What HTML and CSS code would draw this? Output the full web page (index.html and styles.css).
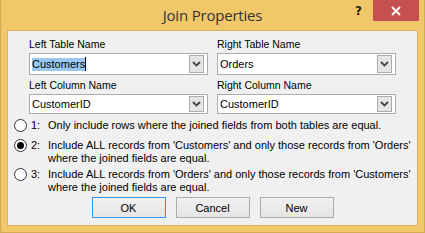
FILE: index.html
```html
<!DOCTYPE html>
<html>
<head>
<meta charset="utf-8">
<title>Join Properties</title>
<link rel="stylesheet" href="styles.css">
</head>
<body>
<div class="window">
  <div class="titlebar">
    <div class="tb-side"></div>
    <div class="title">Join Properties</div>
    <div class="tb-side tb-right">
      <span class="help">?</span>
      <span class="close"><svg width="10" height="10" viewBox="0 0 10 10"><path d="M1 1 L9 9 M9 1 L1 9" stroke="#fff" stroke-width="2"/></svg></span>
    </div>
  </div>
  <div class="client">
    <div class="fields">
      <div class="field">
        <div class="label">Left Table Name</div>
        <div class="combo"><span class="value"><span class="sel">Customers</span><span class="caret"></span></span><span class="drop"><svg width="9" height="6" viewBox="0 0 9 6"><path d="M1 1 L4.5 4.5 L8 1" fill="none" stroke="#444" stroke-width="1.8"/></svg></span></div>
      </div>
      <div class="field">
        <div class="label">Right Table Name</div>
        <div class="combo"><span class="value">Orders</span><span class="drop"><svg width="9" height="6" viewBox="0 0 9 6"><path d="M1 1 L4.5 4.5 L8 1" fill="none" stroke="#444" stroke-width="1.8"/></svg></span></div>
      </div>
      <div class="field">
        <div class="label">Left Column Name</div>
        <div class="combo combo-sm"><span class="value">CustomerID</span><span class="drop"><svg width="9" height="6" viewBox="0 0 9 6"><path d="M1 1 L4.5 4.5 L8 1" fill="none" stroke="#444" stroke-width="1.8"/></svg></span></div>
      </div>
      <div class="field">
        <div class="label">Right Column Name</div>
        <div class="combo combo-sm"><span class="value">CustomerID</span><span class="drop"><svg width="9" height="6" viewBox="0 0 9 6"><path d="M1 1 L4.5 4.5 L8 1" fill="none" stroke="#444" stroke-width="1.8"/></svg></span></div>
      </div>
    </div>
    <div class="options">
      <div class="opt opt-first">
        <span class="radio"></span><span class="num">1:</span>
        <span class="text">Only include rows where the joined fields from both tables are equal.</span>
      </div>
      <div class="opt opt-mid">
        <span class="radio checked"></span><span class="num">2:</span>
        <span class="text">Include ALL records from 'Customers' and only those records from 'Orders'<br>where the joined fields are equal.</span>
      </div>
      <div class="opt">
        <span class="radio"></span><span class="num">3:</span>
        <span class="text">Include ALL records from 'Orders' and only those records from 'Customers'<br>where the joined fields are equal.</span>
      </div>
    </div>
    <div class="buttons">
      <div class="btn btn-default">OK</div>
      <div class="btn">Cancel</div>
      <div class="btn">New</div>
    </div>
  </div>
</div>
</body>
</html>
```
FILE: styles.css
```css
* { box-sizing: border-box; }
html, body { margin: 0; padding: 0; }
body {
  width: 425px;
  height: 233px;
  overflow: hidden;
  font-family: "Liberation Sans", Arial, sans-serif;
  font-size: 11px;
  color: #000;
}
.window {
  width: 425px;
  height: 233px;
  background: #f0c869;
  border: 1px solid #d3aa4f;
  border-top: none;
  display: flex;
  flex-direction: column;
}
.titlebar {
  height: 30px;
  flex: none;
  display: grid;
  grid-template-columns: 1fr auto 1fr;
  align-items: start;
}
.title {
  font-family: "Open Sans", "Noto Sans", sans-serif;
  font-size: 15px;
  color: #333;
  line-height: 30px;
  letter-spacing: -0.2px;
}
.tb-right {
  display: flex;
  justify-content: flex-end;
  align-items: flex-start;
  padding-right: 5px;
}
.help {
  font-family: "DejaVu Sans", sans-serif;
  font-weight: bold;
  font-size: 12px;
  color: #222;
  margin-top: 4px;
  margin-right: 11px;
}
.close {
  width: 46px;
  height: 21px;
  background: #c75050;
  display: flex;
  align-items: center;
  justify-content: center;
}
.client {
  margin: 0 6px;
  height: 196px;
  background: #f0f0f0;
  border: 1px solid #d8b35f;
  padding: 7px 0 0 0;
}
.fields {
  display: grid;
  grid-template-columns: 179px 179px;
  column-gap: 9px;
  padding-left: 21px;
}
.label {
  font-size: 10.5px;
  line-height: 13px;
  height: 15px;
}
.combo {
  height: 22px;
  border: 1px solid #acacac;
  background: #fff;
  display: flex;
  align-items: center;
  justify-content: space-between;
  padding: 0 3px 0 2px;
  margin-bottom: 4px;
}
.combo-sm { height: 20px; margin-bottom: 0; }
.value {
  display: flex;
  align-items: center;
  line-height: 13px;
}
.sel {
  background: #99c9f2;
}
.caret {
  display: inline-block;
  width: 1px;
  height: 14px;
  background: #000;
}
.drop {
  width: 15px;
  height: 18px;
  background: #e5e5e5;
  border: 1px solid #acacac;
  display: flex;
  align-items: center;
  justify-content: center;
}
.combo-sm .drop { height: 16px; }
.options {
  padding-left: 6px;
  padding-top: 5px;
}
.opt {
  display: flex;
  align-items: flex-start;
  line-height: 13px;
}
.opt-first { padding-bottom: 7px; }
.opt-mid { padding-bottom: 3px; }
.radio {
  width: 13px;
  height: 13px;
  border-radius: 50%;
  border: 1px solid #333;
  background: #fff;
  flex: none;
  display: flex;
  align-items: center;
  justify-content: center;
}
.radio.checked::after {
  content: "";
  width: 7px;
  height: 7px;
  border-radius: 50%;
  background: #000;
}
.num {
  width: 21px;
  padding-left: 4px;
  flex: none;
}
.buttons {
  display: flex;
  justify-content: center;
  gap: 10px;
  margin-top: 3px;
}
.btn {
  width: 74px;
  height: 21px;
  border: 1px solid #acacac;
  background: linear-gradient(#f0f0f0, #e5e5e5);
  display: flex;
  align-items: center;
  justify-content: center;
  font-size: 11px;
}
.btn-default { border-color: #3399ff; }
```
